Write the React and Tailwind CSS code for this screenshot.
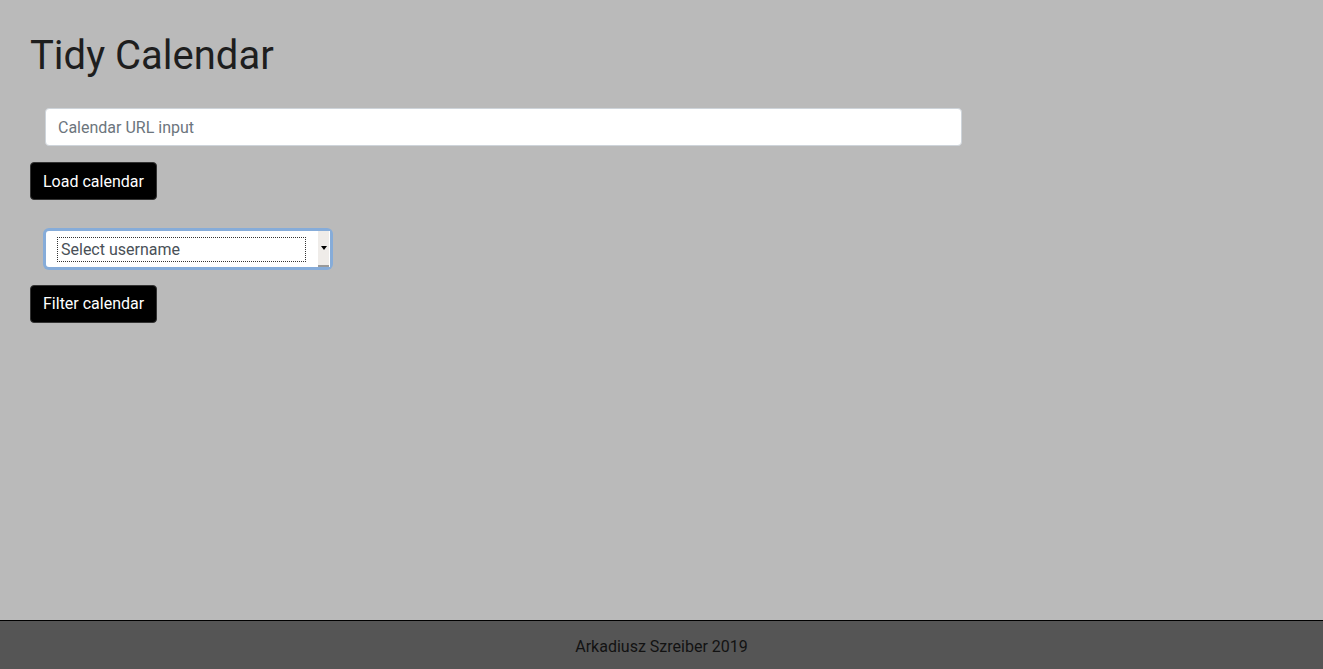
export default function App() {
  return (
    <div
      className="min-h-screen flex flex-col bg-[#bababa]"
      style={{ fontFamily: 'Roboto, "Liberation Sans", sans-serif' }}
    >
      <main className="flex-1 pl-[30px] pt-[32px]">
        <h1 className="text-[40px] leading-[48px] text-[#1e1e1e] font-normal">Tidy Calendar</h1>
        <div className="mt-[28px] pl-[15px]">
          <div className="w-[917px] h-[38px] bg-white border border-[#ced4da] rounded-[4px] flex items-center px-3 pt-[2px] text-[16px] text-[#6c757d]">
            Calendar URL input
          </div>
        </div>
        <button className="mt-4 h-[38px] px-3 pt-[2px] bg-black text-white text-[16px] rounded-[4px] border border-[#333] leading-none">
          Load calendar
        </button>
        <div className="mt-[28px] pl-[13px]">
          <div className="w-[290px] h-[42px] rounded-[6px] bg-[#86acd9] p-[3px]">
            <div className="w-full h-full bg-white rounded-[3px] flex items-stretch">
              <div className="flex-1 flex items-center pl-[11px] pr-[12px]">
                <div className="w-full h-[25px] border border-dotted border-[#333] flex items-center pl-[3px] pt-[1px] text-[16px] text-[#495057]">
                  Select username
                </div>
              </div>
              <div className="w-[11px] bg-[#efece9] border-b-2 border-[#9a9a9a] flex items-center justify-center">
                <div className="w-0 h-0 border-l-[3px] border-r-[3px] border-t-[4px] border-l-transparent border-r-transparent border-t-black" />
              </div>
              <div className="w-[1px] bg-white" />
            </div>
          </div>
        </div>
        <button className="mt-[15px] h-[38px] px-3 bg-black text-white text-[16px] rounded-[4px] border border-[#333] leading-none">
          Filter calendar
        </button>
      </main>
      <footer className="h-[49px] bg-[#555555] border-t border-black flex items-center justify-center pt-[3px] text-[16px] text-[#121212]">
        Arkadiusz Szreiber 2019
      </footer>
    </div>
  );
}
